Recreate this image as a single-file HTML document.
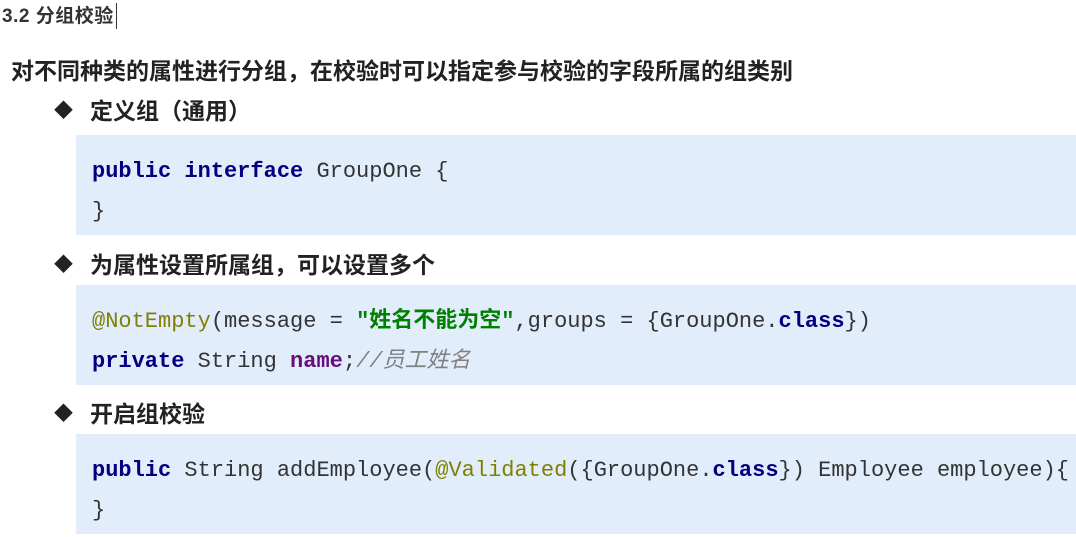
<!DOCTYPE html>
<html><head><meta charset="utf-8"><style>
body{margin:0;width:1076px;height:537px;background:#fff;position:relative;overflow:hidden;font-family:"Liberation Sans","Noto Sans CJK SC",sans-serif;color:#333}
.a{position:absolute;white-space:nowrap}
.t{left:2px;top:4px;font-size:19px;font-weight:bold;color:#333;line-height:26px;letter-spacing:0.5px}
.cur{position:absolute;left:116px;top:3px;width:1px;height:26px;background:#333}
.m{left:11px;top:56px;font-size:23px;font-weight:bold;color:#222;line-height:30px}
.b{left:54px;font-size:23px;font-weight:bold;color:#222;line-height:30px}
.b i{font-style:normal;display:inline-block;width:36px;font-size:19px;vertical-align:top;position:relative;top:1px}
.box{position:absolute;left:76px;width:1000px;height:100px;background:#e2edfc}
.code{position:absolute;left:16px;top:17px;font-family:"Liberation Mono","Noto Sans CJK SC",monospace;font-size:22px;line-height:40px;color:#333;white-space:pre}
.k{color:#000080;font-weight:bold}
.an{color:#808000}
.s{color:#008000;font-weight:bold}
.n{color:#660e7a;font-weight:bold}
.c{color:#808080;font-style:italic}
</style></head><body>
<div class="a t">3.2 分组校验</div><div class="cur"></div>
<div class="a m">对不同种类的属性进行分组，在校验时可以指定参与校验的字段所属的组类别</div>
<div class="a b" style="top:96px"><i>◆</i>定义组（通用）</div>
<div class="box" style="top:135px"><div class="code"><span class="k">public</span> <span class="k">interface</span> GroupOne {
}</div></div>
<div class="a b" style="top:250px"><i>◆</i>为属性设置所属组，可以设置多个</div>
<div class="box" style="top:285px"><div class="code"><span class="an">@NotEmpty</span>(message = <span class="s">"姓名不能为空"</span>,groups = {GroupOne.<span class="k">class</span>})
<span class="k">private</span> String <span class="n">name</span>;<span class="c">//员工姓名</span></div></div>
<div class="a b" style="top:399px"><i>◆</i>开启组校验</div>
<div class="box" style="top:434px"><div class="code"><span class="k">public</span> String addEmployee(<span class="an">@Validated</span>({GroupOne.<span class="k">class</span>}) Employee employee){
}</div></div>
</body></html>
